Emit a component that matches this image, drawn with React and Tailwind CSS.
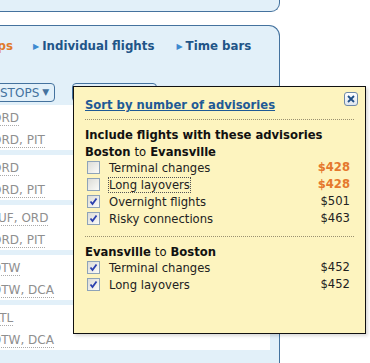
import React from 'react'

const rows = [
  ['ORD', 'ORD, PIT'],
  ['ORD', 'ORD, PIT'],
  ['LUF, ORD', 'ORD, PIT'],
  ['DTW', 'DTW, DCA'],
  ['ATL', 'DTW, DCA'],
]

const outbound = [
  { label: 'Terminal changes', price: '$428', checked: false, hot: true },
  { label: 'Long layovers', price: '$428', checked: false, hot: true, focus: true },
  { label: 'Overnight flights', price: '$501', checked: true },
  { label: 'Risky connections', price: '$463', checked: true },
]

const inbound = [
  { label: 'Terminal changes', price: '$452', checked: true },
  { label: 'Long layovers', price: '$452', checked: true },
]

function Box({ checked }) {
  return (
    <span className="w-[13px] h-[13px] border border-[#8ea3b8] bg-gradient-to-br from-[#dcdcd7] to-[#fbfbf9] flex items-center justify-center shrink-0">
      {checked && (
        <svg width="9" height="9" viewBox="0 0 9 9">
          <path d="M1.5 4.5 L3.5 7 L7.5 1.5" stroke="#2a3fae" strokeWidth="1.8" fill="none" />
        </svg>
      )}
    </span>
  )
}

function Option({ item }) {
  return (
    <div className="h-[17px] flex items-center pl-[13px] pr-[15px]">
      <Box checked={item.checked} />
      <span className={`ml-[9px] leading-[14px] ${item.focus ? 'outline-1 outline-dotted outline-[#555]' : ''}`}>{item.label}</span>
      <span className={`ml-auto ${item.hot ? 'text-[#e5782d] font-bold' : 'text-[#222]'}`}>{item.price}</span>
    </div>
  )
}

export default function App() {
  return (
    <div className="relative w-[370px] h-[363px] overflow-hidden bg-white text-[11.6px] font-['DejaVu_Sans',Verdana,sans-serif]">
      {/* top panel */}
      <div className="w-[280px] h-[12px] bg-[#e2f0f9] border-b border-r border-[#44729e] rounded-br-[9px]" />

      {/* results panel */}
      <div className="mt-[13px] w-[280px] h-[338px] bg-[#e2f0f9] border-t border-r border-[#44729e] rounded-tr-[11px] flex flex-col">
        <div className="h-[56px] pt-[12px] flex items-start font-bold text-[#1f5588] text-[11.8px] whitespace-nowrap">
          <span className="w-[13px] flex justify-end overflow-hidden text-[#e07a2c]">Stops</span>
          <span className="ml-[20px] flex items-center">
            <span className="text-[#3d8ad0] text-[8px] mr-[3px]">▶</span>Individual flights
          </span>
          <span className="ml-[22px] flex items-center">
            <span className="text-[#3d8ad0] text-[8px] mr-[3px]">▶</span>Time bars
          </span>
        </div>

        <div className="h-[22px] mt-[1px] flex items-start">
          <div className="-ml-[6px] h-[19px] px-[5px] border border-[#44729e] rounded-[4px] flex items-center text-[#44729e] text-[12px] gap-[3px]">
            STOPS<span className="text-[9px]">▼</span>
          </div>
          <div className="ml-[17px] w-[85px] h-[19px] border border-[#44729e] rounded-[4px]" />
        </div>

        <div className="w-[270px] flex-1 flex flex-col gap-[5px] overflow-hidden">
          {rows.map((r, i) => (
            <div key={i} className="bg-white h-[45px] shrink-0 pt-[2px] text-[#8f8f8f] text-[12px] leading-[22px] -ml-[8px]">
              <div><span className="border-b border-dotted border-[#aaa]">{r[0]}</span></div>
              <div><span className="border-b border-dotted border-[#aaa]">{r[1]}</span></div>
            </div>
          ))}
        </div>
      </div>

      {/* advisories popup */}
      <div className="absolute left-[73px] top-[86px] w-[293px] h-[248px] bg-[#fdf4bf] border border-[#111] shadow-[2px_2px_3px_rgba(0,0,0,0.15)] text-[#222]">
        <div className="relative px-[11px] pt-[11px]">
          <a className="block font-bold text-[#1f5a96] underline leading-[15px]">Sort by number of advisories</a>
          <span className="absolute right-[7px] top-[5px] w-[14px] h-[14px] border border-[#6f8aa8] rounded-[3px] bg-gradient-to-b from-[#ffffff] to-[#dfe6ee] flex items-center justify-center">
            <svg width="8" height="8" viewBox="0 0 8 8">
              <path d="M1 1 L7 7 M7 1 L1 7" stroke="#1f4f86" strokeWidth="1.8" />
            </svg>
          </span>
          <div className="mt-[6px] border-t border-dotted border-[#9a9170]" />
        </div>

        <div className="px-[11px] pt-[7px] font-bold text-[#111] leading-[17px]">
          <div>Include flights with these advisories</div>
          <div>Boston <span className="font-normal">to</span> Evansville</div>
        </div>
        <div className="-mt-[2px]">
          {outbound.map((o) => <Option key={o.label} item={o} />)}
        </div>

        <div className="mx-[11px] mt-[9px] border-t border-dotted border-[#9a9170]" />

        <div className="px-[11px] pt-[7px] font-bold text-[#111] leading-[17px]">
          Evansville <span className="font-normal">to</span> Boston
        </div>
        <div className="-mt-[2px]">
          {inbound.map((o) => <Option key={o.label + '2'} item={o} />)}
        </div>
      </div>
    </div>
  )
}
